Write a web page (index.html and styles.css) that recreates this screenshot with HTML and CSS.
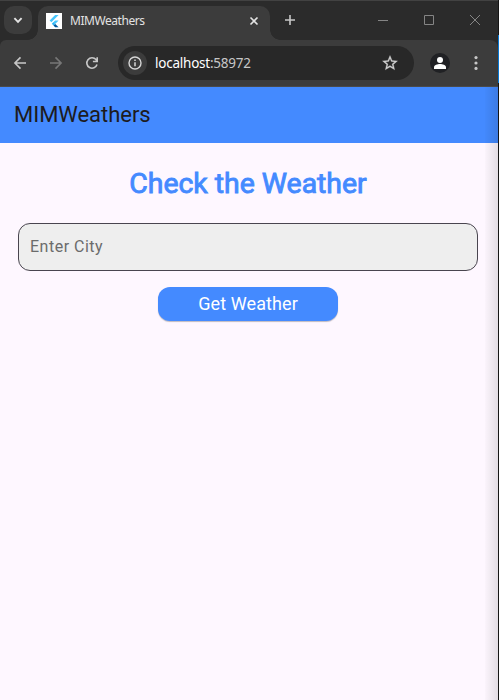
FILE: index.html
```html
<!DOCTYPE html>
<html lang="en">
<head>
<meta charset="utf-8">
<title>MIMWeathers</title>
<link rel="stylesheet" href="styles.css">
</head>
<body>
<div class="window">
  <div class="browser">
    <div class="tabstrip">
      <div class="tab-search">
        <svg width="28" height="28" viewBox="0 0 28 28"><path d="M10.4 12.2l3.6 3.6 3.6-3.6" fill="none" stroke="#e3e3e3" stroke-width="1.9"/></svg>
      </div>
      <div class="tab">
        <svg class="favicon" width="16" height="16" viewBox="0 0 16 16"><path fill="#fff" d="M0 0h16v16H0z"/><path fill="#47c5fb" d="M9.1 2h3.5L5.4 9.2 3.6 7.5z"/><path fill="#47c5fb" d="M9.1 7.5h3.5L9.2 10.9 7.4 9.2 5.8 10.8z"/><path fill="#29b6f6" d="M5.8 10.8l1.7-1.7 1.8 1.8-1.8 1.7z"/><path fill="#01579b" d="M7.5 12.6l1.8-1.7 3.3 3.3H9.1z"/></svg>
        <span class="tab-title">MIMWeathers</span>
        <svg class="tab-close" width="16" height="16" viewBox="0 0 16 16"><path d="M4.5 4.5l7 7m0-7l-7 7" stroke="#e3e3e3" stroke-width="1.6"/></svg>
      </div>
      <svg class="new-tab" width="16" height="16" viewBox="0 0 16 16"><path d="M8 3v10M3 8h10" stroke="#c7c7c7" stroke-width="1.6"/></svg>
      <div class="controls">
        <svg width="12" height="12" viewBox="0 0 12 12"><path d="M1 6.5h10" stroke="#858585"/></svg>
        <svg width="12" height="12" viewBox="0 0 12 12"><path d="M1.5 1.5h9v9h-9z" fill="none" stroke="#858585"/></svg>
        <svg width="12" height="12" viewBox="0 0 12 12"><path d="M1 1l10 10m0-10L1 11" stroke="#858585"/></svg>
      </div>
    </div>
    <div class="toolbar">
      <svg class="nav" width="20" height="20" viewBox="0 0 20 20"><path d="M16 10H5m5.5-5.6L4.9 10l5.6 5.6" fill="none" stroke="#c7c7c7" stroke-width="1.6"/></svg>
      <svg class="nav" width="20" height="20" viewBox="0 0 20 20"><path d="M4 10h11M9.500 4.400l5.600 5.600-5.600 5.600" fill="none" stroke="#777" stroke-width="1.600"/></svg>
      <svg class="nav" width="20" height="20" viewBox="0 0 20 20"><path d="M15 11.500A5.200 5.200 0 1 1 14 6.600L15.200 7.900M15.200 4.200v4.300h-4.300" fill="none" stroke="#c7c7c7" stroke-width="1.600"/></svg>
      <div class="omnibox">
        <div class="info">
          <svg width="24" height="24" viewBox="0 0 24 24"><circle cx="12" cy="12" r="6" fill="none" stroke="#d6d6d6" stroke-width="1.4"/><path d="M12 11.300v4M12 8.500v1.500" stroke="#d6d6d6" stroke-width="1.500"/></svg>
        </div>
        <div class="url"><span class="host">localhost</span>:58972</div>
        <svg class="star" width="18" height="18" viewBox="0 0 24 24"><path fill="#d0d0d0" stroke="#d0d0d0" stroke-width=".4" d="M22 9.240l-7.190-.620L12 2 9.190 8.630 2 9.240l5.460 4.730L5.820 21 12 17.270 18.180 21l-1.630-7.030L22 9.240zM12 15.400l-3.760 2.270 1-4.280-3.320-2.880 4.380-.380L12 6.100l1.710 4.040 4.380.380-3.320 2.880 1 4.280L12 15.400z"/></svg>
      </div>
      <svg class="profile" width="20" height="20" viewBox="0 0 20 20"><circle cx="10" cy="10" r="10" fill="#202124"/><circle cx="10" cy="7" r="3" fill="#fff"/><path d="M4 16v-1.800c0-2 3.500-3.200 6-3.200s6 1.200 6 3.200V16z" fill="#fff"/></svg>
      <svg class="menu" width="4" height="16" viewBox="0 0 4 16"><g fill="#c7c7c7"><circle cx="2" cy="2.600" r="1.600"/><circle cx="2" cy="8" r="1.600"/><circle cx="2" cy="13.400" r="1.600"/></g></svg>
    </div>
    <div class="page">
      <header class="appbar">MIMWeathers</header>
      <main>
        <h1>Check the Weather</h1>
        <input class="city" type="text" placeholder="Enter City">
        <button class="submit">Get Weather</button>
      </main>
    </div>
  </div>
  <div class="edge"><div class="edge-accent"></div></div>
</div>
</body>
</html>
```
FILE: styles.css
```css
* { box-sizing: border-box; }
body { margin: 0; overflow: hidden; }
svg { display: block; flex: none; }
.window { display: flex; width: 499px; height: 700px; }
.browser { width: 498px; display: flex; flex-direction: column; background: #2b2b2b; }
.tabstrip {
  display: flex; height: 40px; padding: 5px 17px 0 4px;
  border-top: 1px solid #424242;
  font-family: "Noto Sans", sans-serif;
}
.tab-search { width: 28px; height: 28px; border-radius: 10px; background: #3c3c3c; }
.tab {
  position: relative; display: flex; align-items: center;
  width: 232px; height: 34px; margin-left: 6px; padding: 0 8px 5px;
  background: #3c3c3c; border-radius: 10px 10px 0 0;
}
.tab::before, .tab::after {
  content: ""; position: absolute; bottom: 0; width: 10px; height: 10px;
}
.tab::before { right: 100%; background: radial-gradient(circle at 0 0, transparent 9.5px, #3c3c3c 10px); }
.tab::after { left: 100%; background: radial-gradient(circle at 100% 0, transparent 9.5px, #3c3c3c 10px); }
.tab-title { margin-left: 8px; font-size: 12px; line-height: 16px; letter-spacing: -0.45px; color: #e3e3e3; }
.tab-close { margin-left: auto; }
.new-tab { margin: 6px 0 0 12px; }
.controls { display: flex; gap: 34px; margin: 8px 0 0 auto; }
.toolbar {
  display: flex; align-items: center; height: 47px; padding: 0 20px 0 10px;
  background: #3c3c3c; border-bottom: 1px solid #4a4a4a; border-radius: 6px 8px 0 0;
}
.nav { margin-right: 16px; }
.omnibox {
  display: flex; align-items: center; width: 296px; height: 34px; padding: 0 15px 0 5px;
  border-radius: 17px; background: #282828;
}
.info { width: 24px; height: 24px; border-radius: 50%; background: #3c3c3c; }
.url { margin-left: 8px; font: 13.5px/20px "Noto Sans", sans-serif; letter-spacing: -0.23px; color: #c7c7c7; }
.host { color: #fff; }
.star { margin-left: auto; }
.profile { margin-left: 16px; }
.menu { margin-left: auto; }
.page { position: relative; flex: 1; background: #fef7ff; font-family: Roboto, sans-serif; }
.page::after {
  content: ""; position: absolute; inset: 0 0 0 auto; width: 13px; pointer-events: none;
  background: linear-gradient(to right, rgba(0,0,0,.01), rgba(0,0,0,.11));
}
.appbar { height: 56px; padding-left: 14px; font-size: 22px; line-height: 56px; letter-spacing: -0.03px; color: #1d1b20; background: #448aff; }
main { display: flex; flex-direction: column; align-items: center; padding: 20px 20px 0 18px; }
h1 {
  margin: 0; font-size: 28.4px; line-height: 41px; font-weight: 400; color: #448aff;
  -webkit-text-stroke: 0.9px #448aff;
}
.city {
  width: 460px; height: 48px; margin-top: 19px; padding: 0 11px 2px;
  font: 16px Roboto, sans-serif; letter-spacing: .5px;
  border: 1px solid #49454f; border-radius: 12px; background: #eee;
}
.city::placeholder { color: #6b6b6b; opacity: 1; }
.submit {
  width: 180px; height: 34px; margin-top: 16px; padding: 0 0 2px;
  font: 18px Roboto, sans-serif; letter-spacing: .1px; color: #fff;
  border: 0; border-radius: 12px; background: #448aff;
  box-shadow: 0 1px 1px rgba(0,0,0,.25);
}
.edge { width: 1px; padding-top: 35px; background: #151515; }
.edge-accent { height: 48px; background: #0878d4; }
```
